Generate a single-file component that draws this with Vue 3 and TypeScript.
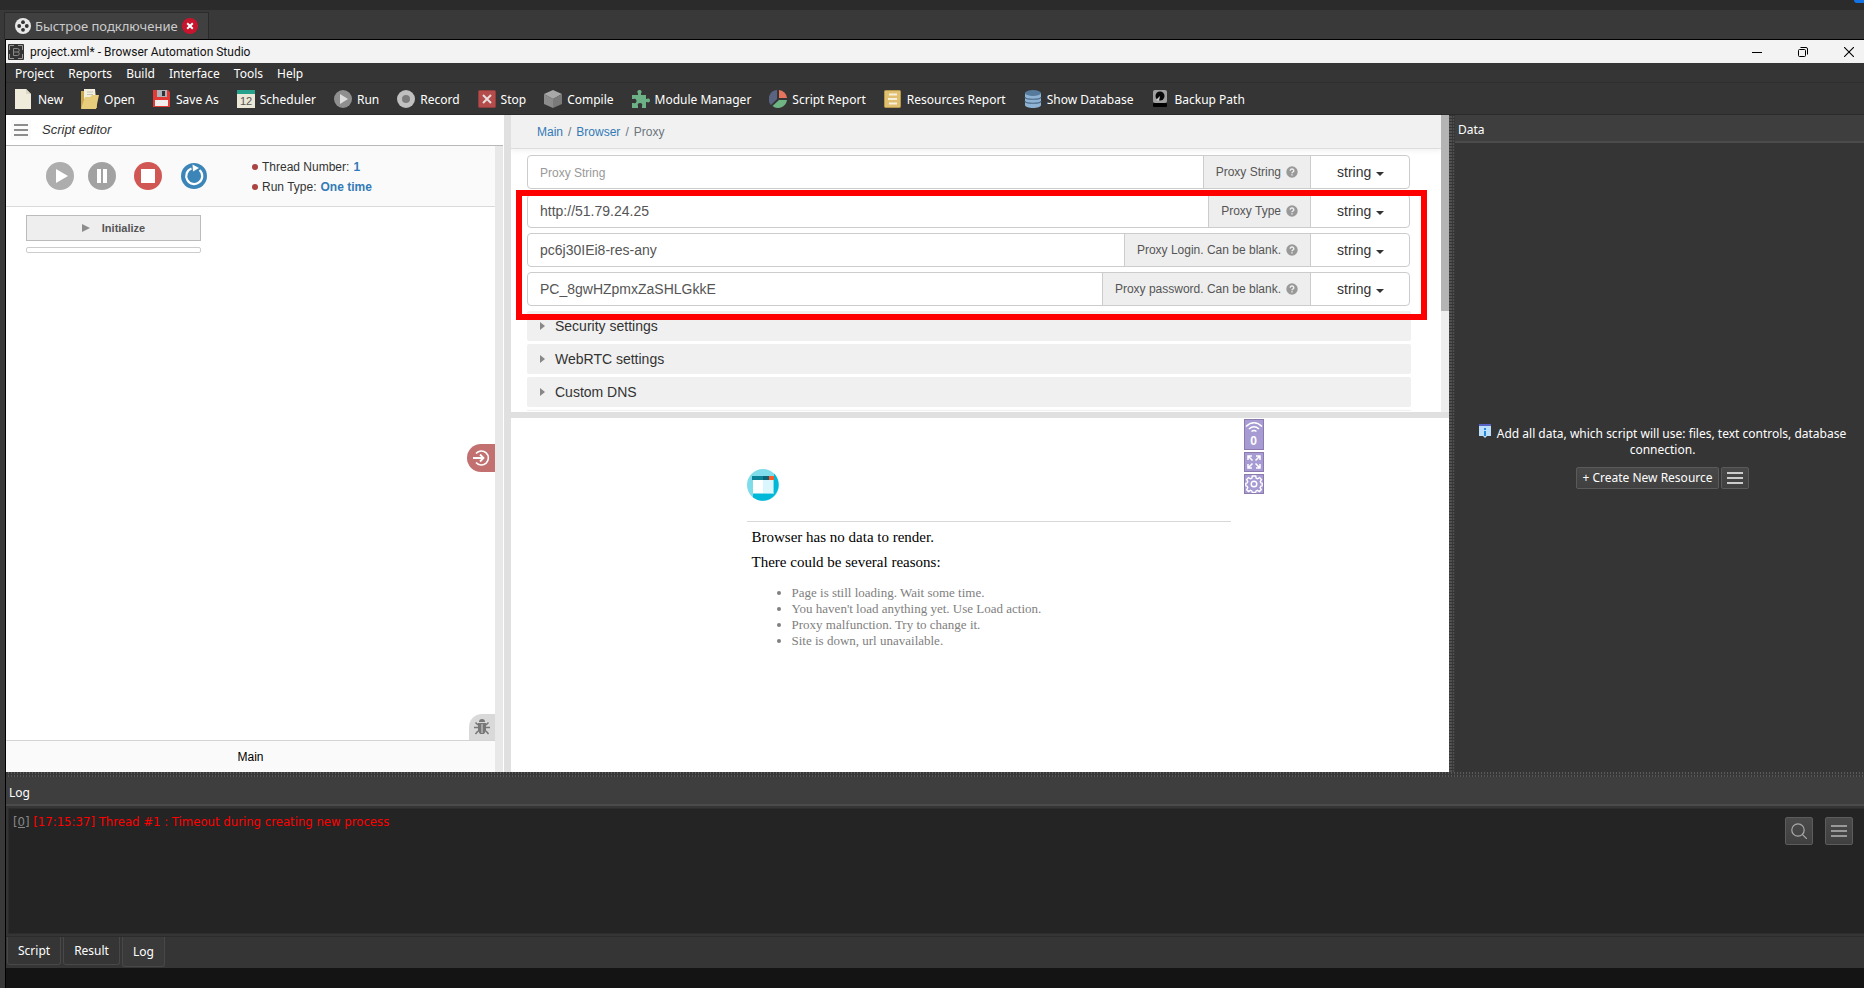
<script setup lang="ts">
import { ref } from 'vue'

interface ProxyField {
  id: string
  label: string
  value: string
  placeholder: string
  kind: string
}

const menus = ['Project', 'Reports', 'Build', 'Interface', 'Tools', 'Help']

const tools = [
  { icon: 'new', label: 'New' },
  { icon: 'open', label: 'Open' },
  { icon: 'save', label: 'Save As' },
  { icon: 'calendar', label: 'Scheduler' },
  { icon: 'run', label: 'Run' },
  { icon: 'record', label: 'Record' },
  { icon: 'stop', label: 'Stop' },
  { icon: 'cube', label: 'Compile' },
  { icon: 'puzzle', label: 'Module Manager' },
  { icon: 'pie', label: 'Script Report' },
  { icon: 'list', label: 'Resources Report' },
  { icon: 'database', label: 'Show Database' },
  { icon: 'disk', label: 'Backup Path' },
]

const fields = ref<ProxyField[]>([
  { id: 'proxy-string', label: 'Proxy String', value: '', placeholder: 'Proxy String', kind: 'string' },
  { id: 'proxy-type', label: 'Proxy Type', value: 'http://51.79.24.25', placeholder: '', kind: 'string' },
  { id: 'proxy-login', label: 'Proxy Login. Can be blank.', value: 'pc6j30IEi8-res-any', placeholder: '', kind: 'string' },
  { id: 'proxy-password', label: 'Proxy password. Can be blank.', value: 'PC_8gwHZpmxZaSHLGkkE', placeholder: '', kind: 'string' },
])

const sections = ['Security settings', 'WebRTC settings', 'Custom DNS']

const reasons = [
  'Page is still loading. Wait some time.',
  "You haven't load anything yet. Use Load action.",
  'Proxy malfunction. Try to change it.',
  'Site is down, url unavailable.',
]

const tabs = ['Script', 'Result', 'Log']
const activeTab = ref('Log')
</script>

<template>
  <div class="desktop">
    <div class="topstrip"><span class="presence"></span></div>
    <div class="tabstrip">
      <div class="session">
        <svg width="16" height="16" viewBox="0 0 16 16"><circle cx="8" cy="8" r="8" fill="#e8e8e8" /><g fill="#333"><circle cx="8" cy="4.2" r="1.9" /><circle cx="8" cy="11.8" r="1.9" /><circle cx="4.2" cy="8" r="1.9" /><circle cx="11.8" cy="8" r="1.9" /></g></svg>
        <span>Быстрое подключение</span>
        <button class="session-close" aria-label="Закрыть">
          <svg width="16" height="16" viewBox="0 0 16 16"><circle cx="8" cy="8" r="8" fill="#c8142c" /><path d="M5.2 5.2l5.6 5.6M10.8 5.2l-5.6 5.6" stroke="#fff" stroke-width="2" /></svg>
        </button>
      </div>
    </div>

    <div class="window">
      <header class="titlebar">
        <svg width="16" height="16" viewBox="0 0 16 16"><rect width="16" height="16" rx="1" fill="#333" /><path d="M1.500 6V1.500H6M10 1.500h4.500V6M14.500 10v4.500H10M6 14.500H1.500V10" fill="none" stroke="#999" /><path d="M5.500 4.500v7h4a1.700 1.700 0 0 0 0-3.500H5.500M9.500 8a1.700 1.700 0 0 0 0-3.500H5.500" fill="none" stroke="#888" /></svg>
        <h1>project.xml* - Browser Automation Studio</h1>
        <div class="wincontrols">
          <button aria-label="Minimize"><svg width="10" height="10"><path d="M0 5.500h10" stroke="#000" /></svg></button>
          <button aria-label="Restore"><svg width="10" height="10" fill="none" stroke="#000"><rect x=".5" y="2.500" width="7" height="7" rx="1" /><path d="M2.500 .5H8A1.500 1.500 0 0 1 9.500 2V7.500" /></svg></button>
          <button aria-label="Close"><svg width="10" height="10"><path d="M0 0l10 10M10 0L0 10" stroke="#000" stroke-width="1.100" /></svg></button>
        </div>
      </header>

      <nav class="menubar">
        <button v-for="m in menus" :key="m">{{ m }}</button>
      </nav>

      <div class="toolbar">
        <button v-for="t in tools" :key="t.label">
          <svg v-if="t.icon === 'new'" width="18" height="20" viewBox="0 0 18 20"><path d="M0 0h11l5 5v15H0z" fill="#f0ecdc" /><path d="M11 0v5h5z" fill="#dcd8c4" /></svg>
          <svg v-else-if="t.icon === 'open'" width="18" height="20" viewBox="0 0 18 20"><path d="M0 2h8v4h8v13H0z" fill="#c9a84e" /><path d="M3 0h11l1 10H3z" fill="#f4f0e0" /><path d="M6 3h6M6 5.500h6" stroke="#c8c4b4" /><path d="M4 8h5l2-2h7l-3 14H0z" fill="#e8cd7c" /></svg>
          <svg v-else-if="t.icon === 'save'" width="18" height="18" viewBox="0 0 18 18"><path d="M0 0h15l2 2v15H0z" fill="#e33a36" /><rect x="4" y="0" width="10" height="7" fill="#a9b4bc" /><rect x="9" y="1" width="3" height="5" fill="#333" /><rect x="2" y="10" width="13" height="6" fill="#f2eeee" /></svg>
          <svg v-else-if="t.icon === 'calendar'" width="18" height="18" viewBox="0 0 18 18"><rect width="18" height="18" fill="#ece8d8" /><rect width="18" height="4" fill="#25a18c" /><text x="9" y="15" text-anchor="middle" class="day">12</text></svg>
          <svg v-else-if="t.icon === 'run'" width="18" height="18" viewBox="0 0 18 18"><circle cx="9" cy="9" r="9" fill="#8f8f8f" /><path d="M6 4l8 5-8 5z" fill="#ddd" /></svg>
          <svg v-else-if="t.icon === 'record'" width="18" height="18" viewBox="0 0 18 18"><circle cx="9" cy="9" r="9" fill="#c0c0c0" /><circle cx="9" cy="9" r="4" fill="#7c7c7c" /></svg>
          <svg v-else-if="t.icon === 'stop'" width="18" height="18" viewBox="0 0 18 18"><rect x=".5" y=".5" width="17" height="17" rx="1" fill="#b44c4c" stroke="#8f3e3e" /><path d="M5 5l8 8M13 5l-8 8" stroke="#e8dede" stroke-width="2" /></svg>
          <svg v-else-if="t.icon === 'cube'" width="18" height="18" viewBox="0 0 18 18"><path d="M9 0l9 4-9 5-9-5z" fill="#a8a8a8" /><path d="M0 4l9 5v9l-9-4z" fill="#8c8c8c" /><path d="M18 4l-9 5v9l9-4z" fill="#7a7a7a" /></svg>
          <svg v-else-if="t.icon === 'puzzle'" width="18" height="18" viewBox="0 0 18 18"><path d="M0 5h6V3.500C4.500 1.500 6 0 7.500 0S10.500 1.500 9 3.500V5h5v4h1c1-1 3-.5 3 1.500s-2 2.500-3 1.500h-1v6h-4v-2c1-2-.5-3-2-3s-3 1-2 3v2H0v-5h1.500c2 1 3-.5 3-2s-1-3-3-2H0z" fill="#6db287" /></svg>
          <svg v-else-if="t.icon === 'pie'" width="18" height="18" viewBox="0 0 18 18"><path d="M8 9L2 15A9 9 0 0 1 8 0z" fill="#5a6482" /><path d="M10 0a9 9 0 0 1 8 8h-8z" fill="#e5745c" /><path d="M10 10h8a9 9 0 0 1-14.500 6z" fill="#6fb583" /></svg>
          <svg v-else-if="t.icon === 'list'" width="18" height="18" viewBox="0 0 18 18"><rect x=".5" y=".5" width="16" height="17" rx="1" fill="#e0c070" stroke="#b5984c" /><path d="M5 4.500h8M4 9h9M5 13.500h8" stroke="#f6f0dc" stroke-width="2" /></svg>
          <svg v-else-if="t.icon === 'database'" width="18" height="18" viewBox="-1 0 18 18"><path d="M0 3h16v12c0 4-16 4-16 0z" fill="#8fb3d4" /><ellipse cx="8" cy="3" rx="8" ry="3" fill="#557a9c" /><path d="M0 7c0 3 16 3 16 0M0 11c0 3 16 3 16 0" fill="none" stroke="#4b6a86" stroke-width="1.200" /></svg>
          <svg v-else width="18" height="18" viewBox="0 0 18 18"><rect x="2" y="0" width="14" height="13" rx="2" fill="#a0a0a0" /><circle cx="9" cy="6" r="4.500" fill="#080808" /><path d="M9 6l-4 4 3 1z" fill="#ccc" /><rect x="2" y="13" width="14" height="4" rx="1" fill="#000" /></svg>
          <span>{{ t.label }}</span>
        </button>
      </div>

      <main class="workspace">
        <section class="script">
          <div class="script-head">
            <button class="burger" aria-label="Menu"><svg width="14" height="12"><path d="M0 1h14M0 6h14M0 11h14" stroke="#8c8c8c" stroke-width="2" /></svg></button>
            <em>Script editor</em>
          </div>
          <div class="script-main">
            <div class="controls">
              <button aria-label="Play"><svg width="28" height="28" viewBox="0 0 28 28"><circle cx="14" cy="14" r="14" fill="#adadad" /><path d="M10 7l12 7-12 7z" fill="#fff" /></svg></button>
              <button aria-label="Pause"><svg width="28" height="28" viewBox="0 0 28 28"><circle cx="14" cy="14" r="14" fill="#a2a2a2" /><path d="M9 7h4v14H9zM15 7h4v14h-4z" fill="#fff" /></svg></button>
              <button aria-label="Stop"><svg width="28" height="28" viewBox="0 0 28 28"><circle cx="14" cy="14" r="14" fill="#d05754" /><rect x="7" y="7" width="14" height="14" fill="#fff" /></svg></button>
              <button aria-label="Restart"><svg width="28" height="28" viewBox="0 0 28 28"><circle cx="14" cy="14" r="13" fill="#3c85b8" /><path d="M19.500 8A8 8 0 1 1 11.500 6.500" fill="none" stroke="#fff" stroke-width="2.200" /><path d="M12.500 2.500L19 6 13 9.500z" fill="#fff" /></svg></button>
              <ul>
                <li>Thread Number: <a href="#threads">1</a></li>
                <li>Run Type: <a href="#runtype">One time</a></li>
              </ul>
            </div>
            <div class="canvas">
              <button class="init"><svg width="8" height="8"><path d="M0 0l8 4-8 4z" fill="#8c8c8c" /></svg>Initialize</button>
              <div class="slot"></div>
              <button class="edge exit" aria-label="Go to"><svg width="18" height="16" viewBox="0 0 18 16"><path d="M4 3.500A7 7 0 1 1 4 12.500" fill="none" stroke="#fff" stroke-width="1.600" /><path d="M1 8h10M8 4.500L11.500 8 8 11.500" fill="none" stroke="#fff" stroke-width="1.800" /></svg></button>
              <button class="edge bug" aria-label="Debug"><svg width="16" height="16" viewBox="0 0 16 16"><path d="M5 3a3 3 0 0 1 6 0zM4 4h8v8l-2 3H6l-2-3z" fill="#777" /><path d="M0 8.500h16M1.500 3.500L4 6M14.500 3.500L12 6M1.500 15L4 12M14.500 15L12 12" stroke="#777" stroke-width="1.500" /><path d="M8 5v9" stroke="#d8d8d8" /></svg></button>
            </div>
            <button class="maintab">Main</button>
          </div>
          <div class="track"></div>
        </section>

        <div class="vsplit"></div>

        <div class="center">
          <section class="proxy">
            <div class="form">
              <nav class="crumbs"><a href="#main">Main</a><i>/</i><a href="#browser">Browser</a><i>/</i><span>Proxy</span></nav>
              <div class="rows">
                <div v-for="f in fields" :key="f.id" class="row">
                  <input :id="f.id" v-model="f.value" type="text" :placeholder="f.placeholder" />
                  <label :for="f.id">{{ f.label }}<svg width="12" height="12" viewBox="0 0 12 12"><circle cx="6" cy="6" r="5.700" fill="#999" /><path d="M4.200 4.700a1.800 1.600 0 1 1 2.500 1.400Q6 6.400 6 7.200M6 8.200v1.300" fill="none" stroke="#eee" stroke-width="1.400" /></svg></label>
                  <div class="kind">
                    <select v-model="f.kind" :aria-label="f.label + ' type'"><option>string</option></select>
                    <svg width="8" height="4"><path d="M0 0h8L4 4z" fill="#333" /></svg>
                  </div>
                </div>
              </div>
              <button v-for="s in sections" :key="s" class="fold"><svg width="5" height="8"><path d="M0 0l5 4-5 4z" fill="#888" /></svg>{{ s }}</button>
              <div class="fold-next"></div>
            </div>
            <div class="scroll"><div class="thumb"></div></div>
            <div class="highlight"></div>
          </section>

          <section class="browser">
            <div class="empty">
              <svg width="32" height="32" viewBox="0 0 32 32"><circle cx="16" cy="16" r="16" fill="#7fdceb" /><path d="M27 4.500A16 16 0 0 1 6 28.500V25h21z" fill="#00b9d8" /><rect x="5" y="7" width="11" height="4" fill="#0b8296" /><rect x="16" y="7" width="6" height="4" fill="#0b6274" /><rect x="22" y="7" width="5" height="4" fill="#ff5a28" /><rect x="6" y="11" width="10" height="13" fill="#fff" /><rect x="16" y="11" width="10" height="13" fill="#dcf6fd" /></svg>
              <div class="message">
                <p>Browser has no data to render.</p>
                <p>There could be several reasons:</p>
                <ul><li v-for="r in reasons" :key="r">{{ r }}</li></ul>
              </div>
            </div>
            <div class="side">
              <button class="tall" aria-label="Network">
                <svg width="18" height="12" viewBox="0 0 18 12" fill="none" stroke="#fff" stroke-width="1.600"><path d="M1 5.500Q9-2 17 5.500M4 8Q9 3.500 14 8M6.500 10.500Q9 8.500 11.500 10.500" /></svg>
                <b>0</b>
              </button>
              <button aria-label="Expand"><svg width="14" height="14" viewBox="0 0 14 14" fill="none" stroke="#fff" stroke-width="1.500"><path d="M1 5V1h4M9 1h4v4M13 9v4H9M5 13H1V9M1 1l4.500 4.500M13 1L8.500 5.500M13 13L8.500 8.500M1 13l4.500-4.500" /></svg></button>
              <button aria-label="Settings"><svg width="18" height="18" viewBox="0 0 18 18" fill="none" stroke="#fff" stroke-width="1.400"><path d="M7.300 1h3.400l.5 2.200 1.400.6 2-1.200 1.900 2-1.200 1.900.6 1.300 1.300.4v2.600l-1.500.5-.6 1.400 1.200 1.900-1.900 1.900-1.900-1.200-1.400.6-.5 1.600H7.300l-.5-1.600-1.400-.6-1.900 1.200-1.900-1.900 1.200-1.900-.6-1.400L.8 10.800V8.200l1.400-.4.6-1.300-1.200-1.900 1.900-2 1.900 1.200 1.400-.6z" /><circle cx="9" cy="9" r="2.800" /></svg></button>
            </div>
          </section>
        </div>

        <div class="vgrip"></div>

        <aside class="data">
          <h2>Data</h2>
          <div class="data-body">
            <p><svg width="12" height="14" viewBox="0 0 12 14"><path d="M0 0h12v12H8l-2 2-2-2H0z" fill="#bbdefb" /><rect width="12" height="2" fill="#5763c4" /><path d="M6 4v2M6 7v5" stroke="#2986dd" stroke-width="2" /></svg>Add all data, which script will use: files, text controls, database connection.</p>
            <div class="data-actions">
              <button>+ Create New Resource</button>
              <button aria-label="Resource menu"><svg width="16" height="12"><path d="M0 1h16M0 6h16M0 11h16" stroke="#ccc" stroke-width="2" /></svg></button>
            </div>
          </div>
        </aside>
      </main>

      <div class="hgrip"></div>
      <section class="log">
        <h2>Log</h2>
        <div class="log-body">
          <p><a href="#action-0">[0]</a> <span>[17:15:37] Thread #1 : Timeout during creating new process</span></p>
          <div class="log-tools">
            <button aria-label="Search"><svg width="16" height="16" viewBox="0 0 16 16" fill="none" stroke="#aaa" stroke-width="1.200"><circle cx="7" cy="7" r="6.200" /><path d="M11.300 11.300L16 16" /></svg></button>
            <button aria-label="Log menu"><svg width="16" height="12"><path d="M0 1h16M0 6h16M0 11h16" stroke="#999" stroke-width="2" /></svg></button>
          </div>
        </div>
        <div class="tabs">
          <button v-for="t in tabs" :key="t" :class="{ active: t === activeTab }" @click="activeTab = t">{{ t }}</button>
        </div>
      </section>
      <footer class="status"></footer>
    </div>
  </div>
</template>

<style>
body {
  margin: 0;
  background: #393939;
}
</style>

<style scoped>
* {
  box-sizing: border-box;
}
button,
input,
select {
  font: inherit;
  color: inherit;
  margin: 0;
  padding: 0;
  border: 0;
  background: none;
  border-radius: 0;
}
svg {
  display: block;
  flex: none;
}
p,
h1,
h2,
ul {
  margin: 0;
  padding: 0;
  font-weight: normal;
}
a {
  text-decoration: none;
}
.desktop {
  min-height: 100vh;
  display: flex;
  flex-direction: column;
  background: #393939;
  color: #fff;
  font: 12px/16px "Noto Sans", "DejaVu Sans", sans-serif;
}
.topstrip {
  height: 10px;
  background: #2b2b2b;
  display: flex;
  justify-content: flex-end;
}
.presence {
  width: 10px;
  height: 3px;
  background: #1473e6;
  border-bottom-left-radius: 8px;
}
.tabstrip {
  height: 29px;
  padding: 2px 0 0 4px;
  display: flex;
}
.session {
  display: flex;
  align-items: center;
  gap: 4px;
  padding: 0 10px;
  border: 1px solid #2b2b2b;
  border-bottom: 0;
  background: #404040;
  color: #ccc;
  font: 13px/18px "Noto Sans", sans-serif;
}
.window {
  flex: 1;
  margin-left: 5px;
  border-left: 1px solid #000;
  border-top: 1px solid #000;
  display: flex;
  flex-direction: column;
  background: #353535;
}
.titlebar {
  height: 23px;
  display: flex;
  align-items: center;
  gap: 6px;
  padding: 0 10px 0 2px;
  background: #f3f3f3;
  color: #111;
}
.titlebar h1 {
  font: 12px/16px Roboto, sans-serif;
}
.wincontrols {
  margin-left: auto;
  display: flex;
  gap: 36px;
}
.menubar {
  height: 20px;
  display: flex;
  align-items: center;
  gap: 14px;
  padding: 2px 0 0 9px;
  border-bottom: 1px solid #2e2e2e;
}
.toolbar {
  height: 32px;
  display: flex;
  align-items: center;
  gap: 18px;
  padding-left: 9px;
  border-bottom: 1px solid #2a2a2a;
  white-space: nowrap;
}
.toolbar button {
  display: flex;
  align-items: center;
  gap: 5px;
}
.toolbar span {
  padding-top: 2px;
}
.day {
  font: 11px "Liberation Sans", sans-serif;
  fill: #555;
}
.workspace {
  flex: 1;
  display: grid;
  grid-template-columns: 498px 7px minmax(0, 1fr) 6px 409px;
}
.script {
  display: grid;
  grid-template: auto 1fr / 1fr 8px;
  padding-right: 1px;
  background: #fff;
  color: #333;
  font-family: "Liberation Sans", Arial, sans-serif;
  font-size: 13px;
}
.script-head {
  grid-column: 1 / 3;
  height: 31px;
  display: flex;
  align-items: center;
  gap: 11px;
  padding-left: 5px;
  border-bottom: 1px solid #b8b8b8;
}
.burger {
  width: 20px;
  height: 20px;
  padding: 4px 3px;
  background: #fafafa;
}
.track {
  background: #e8e8e8;
}
.script-main {
  display: flex;
  flex-direction: column;
}
.controls {
  height: 61px;
  display: flex;
  align-items: center;
  padding-left: 40px;
  background: #fafafa;
  border-bottom: 1px solid #dadada;
}
.controls button {
  margin-right: 14px;
}
.controls button + button + button {
  margin-left: 4px;
}
.controls ul {
  margin-left: 30px;
  padding-top: 2px;
  list-style: none;
  font-size: 12px;
  line-height: 20px;
}
.controls li {
  display: flex;
  align-items: center;
  gap: 4px;
}
.controls li::before {
  content: "";
  width: 6px;
  height: 6px;
  border-radius: 50%;
  background: #a94442;
}
.controls a {
  color: #337ab7;
  font-weight: bold;
}
.canvas {
  flex: 1;
  position: relative;
  padding: 8px 20px;
}
.init {
  width: 175px;
  height: 26px;
  display: flex;
  align-items: center;
  justify-content: center;
  gap: 12px;
  background: #eee;
  border: 1px solid #bbb;
  color: #555;
  font-size: 11px;
  font-weight: bold;
}
.slot {
  width: 175px;
  height: 6px;
  margin-top: 6px;
  border: 1px solid #ccc;
  border-radius: 2px;
}
.edge {
  position: absolute;
  right: 0;
  display: flex;
  align-items: center;
  justify-content: center;
}
.exit {
  bottom: 268px;
  width: 28px;
  height: 28px;
  border-radius: 14px 0 0 14px;
  background: #c27070;
}
.bug {
  bottom: 0;
  width: 26px;
  height: 26px;
  border-radius: 13px 0 0 0;
  background: #d9d9d9;
}
.maintab {
  height: 32px;
  border-top: 1px solid #d4d4d4;
  background: #fafafa;
  color: #000;
  font-size: 12px;
}
.vsplit {
  background: #e0e0e0;
}
.center {
  display: flex;
  flex-direction: column;
  background: #fff;
  color: #333;
  font-family: "Liberation Sans", Arial, sans-serif;
}
.proxy {
  position: relative;
  height: 303px;
  display: flex;
  border-bottom: 6px solid #e0e0e0;
}
.form {
  flex: 1;
  overflow: hidden;
}
.crumbs {
  height: 34px;
  display: flex;
  align-items: center;
  gap: 5px;
  padding-left: 26px;
  background: #f1f1f1;
  border-bottom: 1px solid #ddd;
  box-shadow: 0 2px 5px rgba(0, 0, 0, 0.06);
  color: #6c757d;
}
.crumbs a {
  color: #337ab7;
}
.crumbs i {
  font-style: normal;
}
.rows {
  display: grid;
  gap: 5px;
  margin: 6px 31px 5px 16px;
}
.row {
  height: 34px;
  display: flex;
  border: 1px solid #ccc;
  border-radius: 4px;
  overflow: hidden;
}
.row input {
  flex: 1;
  min-width: 0;
  padding: 0 12px;
  color: #555;
  font-size: 14px;
  outline: 0;
}
.row input::placeholder {
  color: #999;
  font-size: 12px;
}
.row label {
  display: flex;
  align-items: center;
  gap: 5px;
  padding: 0 12px;
  background: #eee;
  border-left: 1px solid #ccc;
  border-right: 1px solid #ccc;
  color: #555;
}
.kind {
  position: relative;
  width: 98px;
  font-size: 14px;
}
.kind select {
  width: 100%;
  height: 32px;
  padding-left: 26px;
  appearance: none;
}
.kind svg {
  position: absolute;
  right: 25px;
  top: 16px;
  pointer-events: none;
}
.fold {
  display: flex;
  align-items: center;
  gap: 10px;
  width: calc(100% - 46px);
  height: 30px;
  margin: 0 30px 3px 16px;
  padding-left: 13px;
  border-radius: 2px;
  background: #f0f0f0;
  font-size: 14px;
}
.fold-next {
  height: 1px;
  margin: 0 30px 0 16px;
  background: #f0f0f0;
}
.scroll {
  width: 8px;
  background: #eee;
}
.thumb {
  height: 66%;
  background: #b4b4b4;
}
.highlight {
  position: absolute;
  inset: 75px 22px auto 5px;
  height: 130px;
  border: 6px solid #f00;
  pointer-events: none;
}
.browser {
  flex: 1;
  display: flex;
  justify-content: center;
  gap: 13px;
  padding-left: 50px;
}
.empty {
  width: 484px;
  padding-top: 51px;
  color: #000;
  font-family: "Liberation Serif", "Times New Roman", serif;
}
.message {
  margin-top: 20px;
  padding: 3px 5px;
  border-top: 1px solid #d8d8d8;
  font-size: 15px;
  line-height: 25px;
}
.message ul {
  margin-top: 10px;
  padding-left: 40px;
  color: #808080;
  font-size: 13px;
  line-height: 16px;
}
.side {
  display: flex;
  flex-direction: column;
  gap: 2px;
  padding-top: 1px;
}
.side button {
  width: 20px;
  height: 20px;
  display: flex;
  flex-direction: column;
  align-items: center;
  justify-content: center;
  border: 1px solid #8d7bb0;
  background: #a79bd3;
  color: #fff;
}
.side .tall {
  height: 31px;
  gap: 1px;
}
.side b {
  font-size: 12px;
  line-height: 14px;
}
.vgrip {
  background: repeating-linear-gradient(#353535 0 1px, transparent 1px 3px), linear-gradient(90deg, transparent 3px, #3a3a3a 3px 4px, transparent 4px 5px, #3a3a3a 5px) #505050;
}
.hgrip {
  height: 5px;
  background: repeating-linear-gradient(90deg, #383838 0 2px, transparent 2px 3px), linear-gradient(transparent 2px, #383838 2px 3px, transparent 3px) #585858;
}
.data {
  display: flex;
  flex-direction: column;
}
.data h2 {
  height: 28px;
  padding-left: 3px;
  font-size: 12px;
  line-height: 30px;
  background: #3e3e3e;
  border-bottom: 2px solid #4b4b4b;
}
.data-body {
  flex: 1;
  display: flex;
  flex-direction: column;
  justify-content: center;
  align-items: center;
  gap: 9px;
  padding: 0 4px 2px 10px;
  text-align: center;
}
.data-body p svg {
  display: inline-block;
  margin-right: 6px;
}
.data-actions {
  display: flex;
  gap: 2px;
}
.data-actions button {
  height: 22px;
  display: flex;
  align-items: center;
  padding: 0 5px;
  border: 1px solid #5a5a5a;
  border-radius: 2px;
  background: linear-gradient(#484848, #404040);
}
.log h2 {
  height: 29px;
  padding-left: 3px;
  font-size: 12px;
  line-height: 32px;
  background: #3e3e3e;
  border-bottom: 2px solid #4b4b4b;
}
.log-body {
  height: 126px;
  display: flex;
  justify-content: space-between;
  margin: 2px 0 2px 2px;
  padding: 5px 11px 0 4px;
  border: 1px solid #2c2c2c;
  border-right: 0;
  background: #242424;
}
.log-body p {
  font-family: "DejaVu Sans Condensed", "DejaVu Sans", sans-serif;
  font-size: 13px;
}
.log-body a {
  color: #888;
  text-decoration: underline;
}
.log-body span {
  color: #f00;
}
.log-tools {
  display: flex;
  gap: 12px;
  padding-top: 3px;
}
.log-tools button {
  width: 28px;
  height: 28px;
  display: flex;
  align-items: center;
  justify-content: center;
  border: 1px solid #5c5c5c;
  border-radius: 2px;
  background: linear-gradient(#4a4a4a, #404040);
}
.tabs {
  height: 32px;
  display: flex;
  align-items: flex-start;
  gap: 2px;
  padding-left: 1px;
  border-top: 1px solid #2c2c2c;
}
.tabs button {
  height: 28px;
  padding: 0 10px;
  border: 1px solid #484848;
  border-top: 0;
  border-radius: 0 0 3px 3px;
}
.tabs .active {
  height: 30px;
  background: #3a3a3a;
}
.status {
  height: 20px;
  background: #141414;
}
</style>
